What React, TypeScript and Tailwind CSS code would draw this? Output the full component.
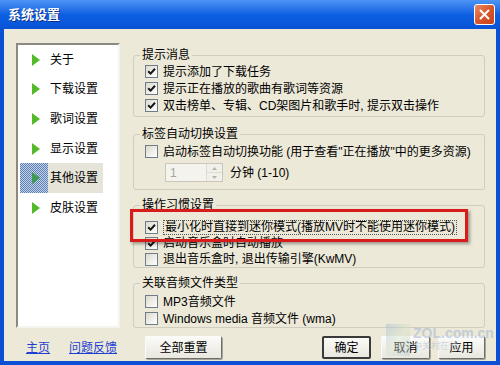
import React from "react";

const font = "font-['Liberation_Sans','Noto_Sans_CJK_SC',sans-serif]";

function Check({ checked }: { checked?: boolean }) {
  return (
    <span className="flex h-[13px] w-[13px] shrink-0 items-center justify-center border border-[#6f7c8a] bg-gradient-to-br from-[#dcd9cd] to-white">
      {checked ? (
        <svg width="9" height="9" viewBox="0 0 9 9">
          <path d="M1.2 4.2 L3.6 6.6 L8 1.8" stroke="#141414" strokeWidth="2" fill="none" />
        </svg>
      ) : null}
    </span>
  );
}

function Row({
  checked,
  children,
  h = "h-[17px]",
}: {
  checked?: boolean;
  children: React.ReactNode;
  h?: string;
}) {
  return (
    <div className={`flex ${h} items-center gap-[5px] pl-[11px] text-[12px] text-black`}>
      <Check checked={checked} />
      <span className="whitespace-nowrap leading-none">{children}</span>
    </div>
  );
}

function Group({
  title,
  className,
  children,
}: {
  title: string;
  className: string;
  children: React.ReactNode;
}) {
  return (
    <fieldset className={`rounded-[3px] border border-[#cfcdbf] ${className}`}>
      <legend className="ml-[6px] px-[2px] text-[12px] leading-[16px] text-black">{title}</legend>
      {children}
    </fieldset>
  );
}

const items = ["关于", "下载设置", "歌词设置", "显示设置", "其他设置", "皮肤设置"];

function NavItem({ label, active }: { label: string; active?: boolean }) {
  return (
    <div className="flex h-[29.6px] items-stretch">
      <div
        className={
          active
            ? "ml-[2px] flex w-[28px] items-center justify-center bg-[repeating-conic-gradient(#5b7fb8_0_25%,#c6d2e2_0_50%)] bg-[length:2px_2px]"
            : "ml-[2px] flex w-[28px] items-center justify-center"
        }
      >
        <svg width="8" height="12" viewBox="0 0 8 12" className="ml-[3px]">
          <path d="M0 0 L8 6 L0 12 Z" fill={active ? "#3f9a52" : "#55b92c"} />
        </svg>
      </div>
      <div
        className={
          active
            ? "flex w-[55px] items-center bg-[#e6e4d9] pl-[2px] text-[12px] text-black"
            : "flex items-center pl-[2px] text-[12px] text-black"
        }
      >
        {label}
      </div>
    </div>
  );
}

function Btn({ label, className, def }: { label: string; className: string; def?: boolean }) {
  return (
    <div
      className={`flex h-[23px] items-center justify-center rounded-[2px] bg-gradient-to-b from-[#fbfbf8] to-[#e9e7de] text-[12px] text-black ${
        def
          ? "border-2 border-[#3a3a3a]"
          : "border border-t-[#fbfbfb] border-l-[#fbfbfb] border-b-[#6f6f6a] border-r-[#6f6f6a] shadow-[1px_1px_0_#a7a59a]"
      } ${className}`}
    >
      {label}
    </div>
  );
}

export default function App() {
  return (
    <div className={`relative flex h-[365px] w-[500px] flex-col overflow-hidden bg-[#0a4fd4] ${font}`}>
      {/* title bar */}
      <div className="flex h-[29px] shrink-0 items-center justify-between bg-gradient-to-b from-[#4d94f5] via-[#0c60e2] to-[#0a52d6] pl-[8px] pr-[5px]">
        <span className="text-[13px] font-bold text-white [text-shadow:1px_1px_0_#0a2f8a]">系统设置</span>
        <div className="flex h-[21px] w-[21px] items-center justify-center rounded-[3px] border border-white bg-gradient-to-br from-[#e98a63] via-[#d9562b] to-[#c44219]">
          <svg width="11" height="11" viewBox="0 0 11 11">
            <path d="M1.5 1.5 L9.5 9.5 M9.5 1.5 L1.5 9.5" stroke="#fff" strokeWidth="2" strokeLinecap="round" />
          </svg>
        </div>
      </div>

      {/* body */}
      <div className="mx-[4px] mb-[4px] flex flex-1 bg-[#ece9d8]">
        {/* left column */}
        <div className="ml-[12px] flex w-[104px] flex-col pt-[14px]">
          <div className="h-[285px] border-2 border-t-[#8c8a80] border-l-[#8c8a80] border-b-[#f4f3ee] border-r-[#f4f3ee] bg-white">
            {items.map((it) => (
              <NavItem key={it} label={it} active={it === "其他设置"} />
            ))}
          </div>
          <div className="mt-[8px] flex h-[23px] items-center gap-[19px] pl-[10px] text-[12px] text-[#1f3fd0] underline">
            <span>主页</span>
            <span>问题反馈</span>
          </div>
        </div>

        {/* right column */}
        <div className="ml-[13px] flex w-[352px] flex-col pt-[18px]">
          <Group title="提示消息" className="h-[70px]">
            <Row checked>提示添加了下载任务</Row>
            <Row checked>提示正在播放的歌曲有歌词等资源</Row>
            <Row checked>双击榜单、专辑、CD架图片和歌手时, 提示双击操作</Row>
          </Group>

          <Group title="标签自动切换设置" className="mt-[9px] h-[64px]">
            <div className="pt-[1px]">
              <Row>启动标签自动切换功能 (用于查看"正在播放"中的更多资源)</Row>
            </div>
            <div className="mt-[3px] flex h-[19px] items-center pl-[31px] text-[12px]">
              <div className="flex h-[19px] w-[58px] items-center border border-[#c9c7ba] bg-[#f4f3ee]">
                <span className="flex-1 pl-[4px] text-[#a5a39a]">1</span>
                <div className="flex h-full w-[16px] flex-col border-l border-[#dedcd0]">
                  <div className="flex flex-1 items-center justify-center border-b border-[#dedcd0] bg-[#f1f0ea]">
                    <svg width="5" height="3" viewBox="0 0 5 3">
                      <path d="M0 3 L2.5 0 L5 3 Z" fill="#b5b3a8" />
                    </svg>
                  </div>
                  <div className="flex flex-1 items-center justify-center bg-[#f1f0ea]">
                    <svg width="5" height="3" viewBox="0 0 5 3">
                      <path d="M0 0 L2.5 3 L5 0 Z" fill="#b5b3a8" />
                    </svg>
                  </div>
                </div>
              </div>
              <span className="ml-[7px]">分钟 (1-10)</span>
            </div>
          </Group>

          <Group title="操作习惯设置" className="mt-[7px] h-[71px]">
            <div className="pt-[6px]">
              <div className="flex h-[16px] items-center gap-[5px] pl-[11px] text-[12px] text-black">
                <Check checked />
                <span className="whitespace-nowrap border border-dotted border-[#555] px-[1px] leading-[13px]">
                  最小化时直接到迷你模式(播放MV时不能使用迷你模式)
                </span>
              </div>
              <Row checked h="h-[16px]">启动音乐盒时自动播放</Row>
              <Row h="h-[16px]">退出音乐盒时, 退出传输引擎(KwMV)</Row>
            </div>
          </Group>

          <Group title="关联音频文件类型" className="mt-[7px] h-[53px]">
            <div className="pt-[2px]">
              <Row>MP3音频文件</Row>
              <Row>Windows media 音频文件 (wma)</Row>
            </div>
          </Group>

          <div className="mt-[8px] flex h-[23px] items-center">
            <Btn label="全部重置" className="ml-[12px] w-[77px]" />
            <Btn label="确定" className="ml-auto w-[49px]" def />
            <Btn label="取消" className="ml-[10px] w-[49px]" />
            <Btn label="应用" className="ml-[8px] w-[47px]" />
          </div>
        </div>
      </div>

      {/* red highlight annotation */}
      <div className="pointer-events-none absolute left-[130px] top-[209px] h-[33px] w-[338px] border-[3px] border-[#d81c1c] shadow-[2px_2px_3px_rgba(0,0,0,0.35)]" />

      {/* watermark */}
      <div className="pointer-events-none absolute left-[386px] top-[324px] flex w-[112px] items-start gap-[3px] whitespace-nowrap opacity-60">
        <div className="h-[32px] w-[24px] shrink-0 bg-gradient-to-br from-[#9fb8d8] via-[#d7e4c8] to-[#b9c8da] opacity-70" />
        <div className="flex flex-col pt-[2px]">
          <span className="text-[14px] font-bold leading-[15px] text-[#a9b9d2]">ZOL.com.cn</span>
          <span className="text-[9px] leading-[11px] text-[#b9c4d2]">中关村在线</span>
        </div>
      </div>
    </div>
  );
}
